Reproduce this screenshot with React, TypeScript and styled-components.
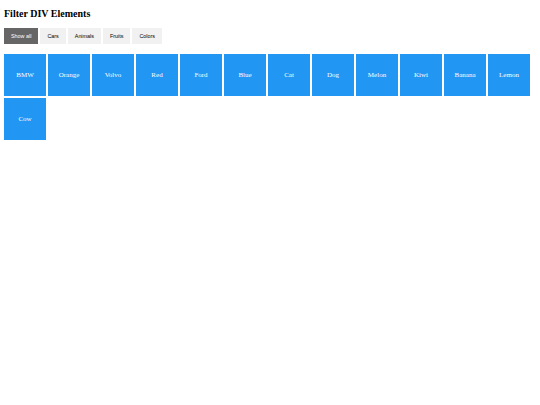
import React, { useState } from 'react';
import styled, { createGlobalStyle } from 'styled-components';

const GlobalStyle = createGlobalStyle`
  body {
    margin: 0;
    background: #fff;
    font-family: "Liberation Serif", "Times New Roman", serif;
  }
`;

const items = [
  { name: 'BMW', kind: 'cars' },
  { name: 'Orange', kind: 'colors fruits' },
  { name: 'Volvo', kind: 'cars' },
  { name: 'Red', kind: 'colors' },
  { name: 'Ford', kind: 'cars' },
  { name: 'Blue', kind: 'colors' },
  { name: 'Cat', kind: 'animals' },
  { name: 'Dog', kind: 'animals' },
  { name: 'Melon', kind: 'fruits' },
  { name: 'Kiwi', kind: 'fruits' },
  { name: 'Banana', kind: 'fruits' },
  { name: 'Lemon', kind: 'fruits' },
  { name: 'Cow', kind: 'animals' },
];

const filters = [
  { label: 'Show all', value: 'all' },
  { label: 'Cars', value: 'cars' },
  { label: 'Animals', value: 'animals' },
  { label: 'Fruits', value: 'fruits' },
  { label: 'Colors', value: 'colors' },
];

const App = () => {
  const [filter, setFilter] = useState('all');

  const shown = items.filter((i) => filter === 'all' || i.kind.split(' ').includes(filter));

  return (
    <>
      <GlobalStyle />
      <SCpage>
        <SCtitle>Filter DIV Elements</SCtitle>
        <SCbuttons>
          {filters.map((f) => (
            <SCbutton key={f.value} $active={filter === f.value} onClick={() => setFilter(f.value)}>
              {f.label}
            </SCbutton>
          ))}
        </SCbuttons>
        <SCgrid>
          {shown.map((i) => (
            <SCbox key={i.name}>{i.name}</SCbox>
          ))}
        </SCgrid>
      </SCpage>
    </>
  );
};

const SCpage = styled.div`
  padding: 0 4px;
`;

const SCtitle = styled.h2`
  margin: 0;
  padding-top: 8px;
  font-size: 10px;
  line-height: 12px;
  font-weight: bold;
  color: #000;
`;

const SCbuttons = styled.div`
  display: flex;
  gap: 2px;
  margin-top: 8px;
`;

const SCbutton = styled.button<{ $active: boolean }>`
  border: none;
  outline: none;
  height: 16px;
  padding: 0 7px;
  font-family: "Liberation Sans", Arial, sans-serif;
  font-size: 5.4px;
  background-color: ${(p) => (p.$active ? '#666' : '#f1f1f1')};
  color: ${(p) => (p.$active ? '#fff' : '#000')};
  cursor: pointer;
  &:hover {
    background-color: ${(p) => (p.$active ? '#666' : '#ddd')};
  }
`;

const SCgrid = styled.div`
  display: flex;
  flex-wrap: wrap;
  gap: 2px;
  margin-top: 10px;
`;

const SCbox = styled.div`
  width: 42px;
  height: 42px;
  line-height: 42px;
  text-align: center;
  background-color: #2196f3;
  color: #fff;
  font-size: 7px;
`;

export default App;
